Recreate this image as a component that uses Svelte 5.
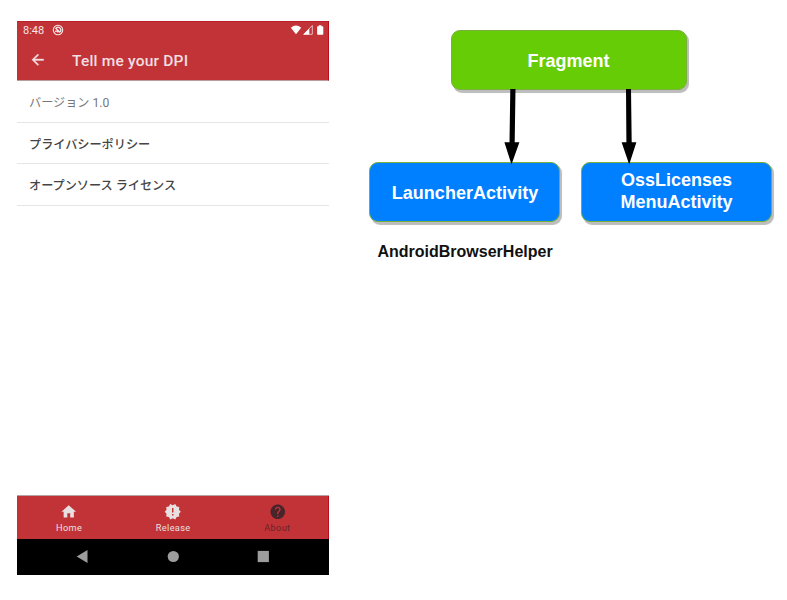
<script>
  const rows = [
    { label: 'バージョン 1.0', muted: true },
    { label: 'プライバシーポリシー' },
    { label: 'オープンソース ライセンス' }
  ];
  const tabs = [
    { label: 'Home', path: 'M10 20v-6h4v6h5v-8h3L12 3 2 12h3v8z' },
    {
      label: 'Release',
      path: 'M23 12l-2.44-2.78.34-3.68-3.61-.82-1.89-3.18L12 3 8.6 1.54 6.71 4.72l-3.61.81.34 3.68L1 12l2.44 2.78-.34 3.69 3.61.82 1.89 3.18L12 21l3.4 1.46 1.89-3.18 3.61-.82-.34-3.68L23 12zm-10 5h-2v-2h2v2zm0-4h-2V7h2v6z'
    },
    {
      label: 'About',
      active: true,
      path: 'M12 2C6.48 2 2 6.48 2 12s4.48 10 10 10 10-4.48 10-10S17.52 2 12 2zm1 17h-2v-2h2v2zm2.07-7.75l-.9.92C13.45 12.9 13 13.5 13 15h-2v-.5c0-1.1.45-2.1 1.17-2.83l1.24-1.26c.37-.36.59-.86.59-1.41 0-1.1-.9-2-2-2s-2 .9-2 2H8c0-2.21 1.79-4 4-4s4 1.79 4 4c0 .88-.36 1.68-.93 2.25z'
    }
  ];
</script>

<main>
  <section class="phone">
    <header>
      <div class="status">
        <span class="time">8:48</span>
        <svg class="dnd" width="12" height="12" viewBox="0 0 12 12" fill="none" stroke="#f5e6e7">
          <circle cx="6" cy="6" r="4.7" stroke-width="1.1" />
          <path d="M3.8 4.4Q6.6 1.9 8.2 4.4T7.6 8L3.4 4M3.1 7.6l1.8-1 1.2 1.7" stroke-width="1.4" />
        </svg>
        <svg class="signals" width="36" height="12" viewBox="0 0 36 12">
          <path d="M.8 3.8Q6 -.8 11.2 3.8L6 10.2z" fill="#fff" />
          <path d="M13.7 10.3L22.3 1.5v8.8z" fill="none" stroke="#f0cdcf" stroke-width=".9" />
          <path d="M13.3 10.5L19.3 4.5v6z" fill="#fff" />
          <path d="M28.8 1.2h2.6v1h1.1q.8 0 .8.8v7q0 .8-.8.8h-4.6q-.8 0-.8-.8V3q0-.8.8-.8h.9z" fill="#fff" />
        </svg>
      </div>
      <div class="appbar">
        <svg width="17.5" height="17.5" viewBox="0 0 24 24" fill="#f1dfe0" stroke="#f1dfe0" stroke-width=".5">
          <path d="M20 11H7.83l5.59-5.59L12 4l-8 8 8 8 1.41-1.41L7.83 13H20v-2z" />
        </svg>
        <h1>Tell me your DPI</h1>
      </div>
    </header>

    <ul>
      {#each rows as row}
        <li class:muted={row.muted}>{row.label}</li>
      {/each}
    </ul>

    <nav>
      {#each tabs as tab}
        <div class="tab" class:active={tab.active}>
          <svg width="17.5" height="17.5" viewBox="0 0 24 24" fill="currentColor"><path d={tab.path} /></svg>
          <span>{tab.label}</span>
        </div>
      {/each}
    </nav>

    <svg class="system" width="312.4" height="36" viewBox="0 0 312.4 36" fill="#9d9d9d">
      <path d="M59.7 17.5L70.5 11.1v12.8z" />
      <circle cx="156.3" cy="17.5" r="5.6" />
      <rect x="240.7" y="11.9" width="11.2" height="11.2" />
    </svg>
  </section>

  <section class="diagram">
    <div class="node fragment"><span>Fragment</span></div>
    <div class="node launcher"><span>LauncherActivity</span></div>
    <div class="node oss"><span>OssLicenses</span><span>MenuActivity</span></div>
    <div class="caption">AndroidBrowserHelper</div>
    <svg class="arrows" width="447" height="600" viewBox="340 0 447 600">
      <path d="M510.3 89h5.2l-.8 53.2h4.7l-7.9 22.3-7.1-22.3h5.1z" />
      <path d="M626 89h5l.7 53.2h4.7l-7.2 22.3-7.6-22.3h4.8z" />
    </svg>
  </section>
</main>

<style>
  :global(body) {
    margin: 0;
    background: #fff;
  }
  main {
    display: flex;
    width: 787px;
    height: 600px;
    overflow: hidden;
    font-family: Roboto, 'Noto Sans CJK JP', sans-serif;
  }
  .phone {
    display: flex;
    flex-direction: column;
    width: 312.4px;
    height: 554px;
    margin: 21px 10.6px 0 17px;
  }
  header {
    box-sizing: border-box;
    height: 60px;
    background: #c23338;
    border-top: 1px solid #b81f29;
    border-right: 1px solid #bd0c19;
    border-bottom: 1px solid #b99c9e;
  }
  .status {
    display: flex;
    align-items: center;
    height: 16px;
    padding: 0 2.4px 0 6px;
  }
  .time {
    width: 28.5px;
    color: #f5e6e7;
    font-size: 11px;
    line-height: 17px;
  }
  .signals {
    margin-left: auto;
  }
  .appbar {
    display: flex;
    align-items: center;
    height: 44px;
    padding-left: 12px;
  }
  h1 {
    margin: 2px 0 0 25.5px;
    color: #f1dfe0;
    font-size: 15.5px;
    font-weight: 500;
    line-height: 20px;
    letter-spacing: 0.2px;
  }
  ul {
    flex: 1;
    margin: 0;
    padding: 0;
    list-style: none;
  }
  li {
    box-sizing: border-box;
    height: 41.6px;
    padding-left: 12px;
    border-bottom: 1.5px solid #e5e5e5;
    color: #444;
    font-size: 12.15px;
    font-weight: 500;
    line-height: 44.5px;
    white-space: nowrap;
  }
  .muted {
    color: #777;
    font-weight: 400;
  }
  nav {
    display: flex;
    box-sizing: border-box;
    height: 44px;
    background: #c23338;
    border-top: 1px solid #b7a2a3;
    box-shadow: inset -1px 0 #bd0c19;
  }
  .tab {
    display: flex;
    flex: 1;
    flex-direction: column;
    align-items: center;
    padding-top: 6.5px;
    color: #e8e0e0;
  }
  .tab svg {
    display: block;
  }
  .tab span {
    margin-top: 2px;
    font-size: 9.2px;
    line-height: 12px;
    letter-spacing: 0.35px;
  }
  .tab.active {
    color: #48252a;
  }
  .active span {
    color: #6a2328;
  }
  .system {
    display: block;
    flex: none;
    background: #000;
  }
  .diagram {
    position: relative;
    width: 447px;
    height: 600px;
    font-family: 'Liberation Sans', Arial, sans-serif;
    font-weight: 700;
  }
  .node {
    position: absolute;
    display: flex;
    box-sizing: border-box;
    flex-direction: column;
    align-items: center;
    justify-content: center;
    border: 1px solid #79b13c;
    border-radius: 9px;
    background: #0080ff;
    box-shadow: 2px 2.5px 0.7px #bdbdbd;
    color: #fff;
    font-size: 18px;
    line-height: 22px;
  }
  .fragment {
    left: 111px;
    top: 29.5px;
    width: 236px;
    height: 60px;
    padding: 2px 1px 0 0;
    background: #66cc05;
  }
  .launcher {
    left: 29px;
    top: 162px;
    width: 191px;
    height: 59.5px;
    padding: 2px 0 0 1px;
    letter-spacing: 0.03px;
  }
  .oss {
    left: 241px;
    top: 162px;
    width: 191px;
    height: 59.5px;
    padding-bottom: 1.5px;
  }
  .caption {
    position: absolute;
    left: 37.5px;
    top: 242px;
    color: #111;
    font-size: 16px;
    line-height: 20px;
  }
  .arrows {
    position: absolute;
    left: 0;
    top: 0;
  }
</style>
